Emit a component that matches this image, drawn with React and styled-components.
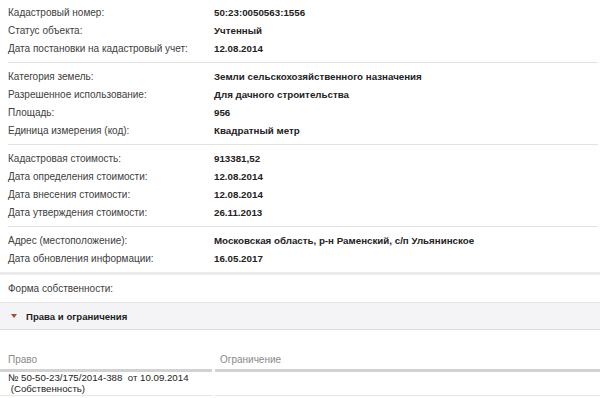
import React from "react";
import styled, { createGlobalStyle } from "styled-components";

const GlobalStyle = createGlobalStyle`
  html, body {
    margin: 0;
    padding: 0;
    background: #ffffff;
  }
  body {
    font-family: "Liberation Sans", Arial, sans-serif;
    font-size: 10px;
    color: #3a3a3a;
  }
`;

const Page = styled.div`
  width: 600px;
  height: 398px;
  overflow: hidden;
  background: #ffffff;
`;

const Group = styled.div`
  margin: 0 2px 0 8px;
  padding: ${(p) => (p.first ? "3px" : "4px")} 0 5px;
  border-bottom: ${(p) => (p.last ? "none" : "1px solid #e2e2e2")};
`;

const Row = styled.div`
  display: grid;
  grid-template-columns: 206px 1fr;
  height: 18px;
  align-items: center;
`;

const Label = styled.span`
  color: #404040;
`;

const Value = styled.span`
  font-weight: bold;
  font-size: 9.75px;
  color: #222222;
`;

const OwnerRow = styled.div`
  border-top: 3px solid #ececec;
  height: 27px;
  display: flex;
  align-items: center;
  padding-left: 8px;
  color: #404040;
`;

const SectionBar = styled.div`
  display: flex;
  align-items: center;
  gap: 9px;
  height: 26px;
  padding-left: 11px;
  background: #f4f3f6;
  border-top: 1px solid #e4e4e6;
  border-bottom: 1px solid #dcdcdc;
  font-weight: bold;
  color: #1e1e1e;
  font-size: 9.6px;
`;

const Caret = styled.span`
  width: 0;
  height: 0;
  border-left: 3px solid transparent;
  border-right: 3px solid transparent;
  border-top: 4px solid #a0502d;
`;

const Table = styled.div`
  display: grid;
  grid-template-columns: 212px 1fr;
  column-gap: 3px;
  margin-top: 19px;
`;

const HeadCell = styled.div`
  height: 20px;
  display: flex;
  align-items: center;
  padding-left: ${(p) => p.indent}px;
  color: #8a8a8a;
  border-bottom: 3px solid #d2d2d2;
`;

const Cell = styled.div`
  padding: 0 0 0 8px;
  line-height: 11px;
  font-size: 9.7px;
  color: #222222;
  white-space: pre;
  border-bottom: 1px solid #e6e6e6;
  height: 23px;
`;

const groups = [
  [
    ["Кадастровый номер:", "50:23:0050563:1556"],
    ["Статус объекта:", "Учтенный"],
    ["Дата постановки на кадастровый учет:", "12.08.2014"],
  ],
  [
    ["Категория земель:", "Земли сельскохозяйственного назначения"],
    ["Разрешенное использование:", "Для дачного строительства"],
    ["Площадь:", "956"],
    ["Единица измерения (код):", "Квадратный метр"],
  ],
  [
    ["Кадастровая стоимость:", "913381,52"],
    ["Дата определения стоимости:", "12.08.2014"],
    ["Дата внесения стоимости:", "12.08.2014"],
    ["Дата утверждения стоимости:", "26.11.2013"],
  ],
  [
    ["Адрес (местоположение):", "Московская область, р-н Раменский, с/п Ульянинское"],
    ["Дата обновления информации:", "16.05.2017"],
  ],
];

export default function App() {
  return (
    <Page>
      <GlobalStyle />
      {groups.map((rows, gi) => (
        <Group key={gi} first={gi === 0} last={gi === groups.length - 1}>
          {rows.map(([label, value]) => (
            <Row key={label}>
              <Label>{label}</Label>
              <Value>{value}</Value>
            </Row>
          ))}
        </Group>
      ))}
      <OwnerRow>Форма собственности:</OwnerRow>
      <SectionBar>
        <Caret />
        Права и ограничения
      </SectionBar>
      <Table>
        <HeadCell indent={8}>Право</HeadCell>
        <HeadCell indent={5}>Ограничение</HeadCell>
        <Cell>{"№ 50-50-23/175/2014-388  от 10.09.2014\n (Собственность)"}</Cell>
        <Cell />
      </Table>
    </Page>
  );
}
